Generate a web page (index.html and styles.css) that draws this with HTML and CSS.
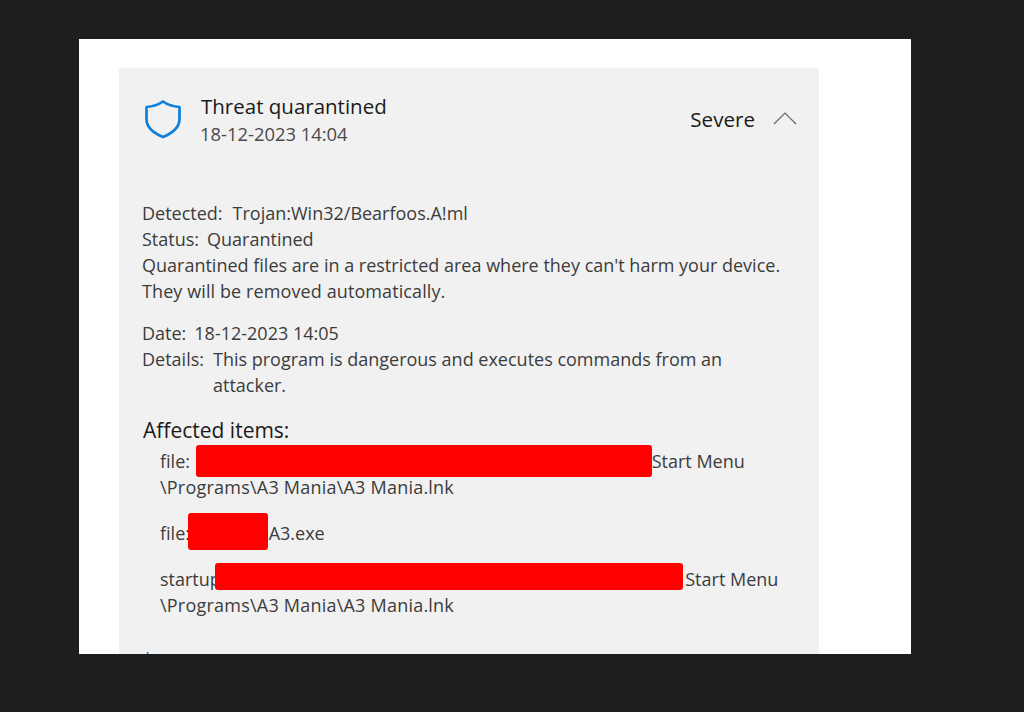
FILE: index.html
```html
<!DOCTYPE html>
<html lang="en">
<head>
    <meta charset="UTF-8">
    <meta name="viewport" content="width=device-width, initial-scale=1.0">
    <title>Threat quarantined</title>
    <link rel="stylesheet" href="styles.css">
</head>
<body>

    <div class="sheet">
        <div class="card">
            <div class="header">
                <svg class="shield" width="38" height="40" viewBox="0 0 38 40">
                    <path d="M19 2.500C24 6 29 7.500 35.500 8V20C35.500 28 29 34 19 38C9 34 2.500 28 2.500 20V8C9 7.500 14 6 19 2.500Z" fill="none" stroke="#0f7fd9" stroke-width="2.700" stroke-linejoin="round"/>
                </svg>
                <div class="heading">
                    <div class="title">Threat quarantined</div>
                    <div class="time">18-12-2023 14:04</div>
                </div>
                <div class="severity">Severe</div>
                <svg class="chevron" width="24" height="14" viewBox="0 0 24 14">
                    <path d="M1 13L12 2L23 13" fill="none" stroke="#666" stroke-width="1.200"/>
                </svg>
            </div>

            <div class="block">
                <p><span class="label">Detected:</span>Trojan:Win32/Bearfoos.A!ml</p>
                <p><span class="label tight">Status:</span>Quarantined</p>
                <p>Quarantined files are in a restricted area where they can't harm your device.</p>
                <p class="wide">They will be removed automatically.</p>
            </div>

            <div class="block">
                <p><span class="label tight">Date:</span>18-12-2023 14:05</p>
                <div class="details">
                    <span class="label details-label">Details:</span>
                    <span class="details-text">This program is dangerous and executes commands from an attacker.</span>
                </div>
            </div>

            <h2>Affected items:</h2>
            <div class="items">
                <p>file: <span class="gap-a"></span>Start Menu<br><span class="path">\Programs\A3 Mania\A3 Mania.lnk</span></p>
                <p>file: <span class="gap-b"></span>A3.exe</p>
                <p>startup: <span class="gap-c"></span>Start Menu<br><span class="path">\Programs\A3 Mania\A3 Mania.lnk</span></p>
            </div>

            <a class="more" href="#">Learn more</a>

            <div class="redact r1"></div>
            <div class="redact r2"></div>
            <div class="redact r3"></div>
        </div>
    </div>

</body>
</html>
```

FILE: styles.css
```css
body {
    font-family: "Open Sans", "Noto Sans", sans-serif;
    background-color: #1e1e1e;
    margin: 0;
    padding: 39px 0 0 79px;
    height: 712px;
    box-sizing: border-box;
    overflow: hidden;
}

.sheet {
    background-color: white;
    width: 832px;
    height: 615px;
    padding: 29px 92px 0 40px;
    box-sizing: border-box;
    overflow: hidden;
}

.card {
    background-color: #f1f1f1;
    height: 586px;
    padding: 26px 22px 0 23px;
    position: relative;
    font-size: 18px;
    line-height: 26px;
    color: #3c3c3c;
}

.header {
    display: flex;
    align-items: flex-start;
    height: 106px;
    margin-left: 2px;
}

.shield {
    margin: 5px 19px 0 0;
}

.heading {
    flex: 1;
}

.title {
    font-size: 20.500px;
    color: #1a1a1a;
    margin-top: -1px;
}

.time {
    font-size: 18.400px;
    margin-top: 2px;
    margin-left: -1px;
    color: #4a4a4a;
}

.severity {
    font-size: 20.600px;
    color: #1a1a1a;
    margin-top: 12px;
}

.chevron {
    margin: 17px 0 0 18px;
}

.block {
    margin-bottom: 16px;
}

.block p {
    margin: 0;
}

.wide {
    letter-spacing: 0.1px;
}

.label {
    margin-right: 10px;
}

.tight {
    margin-right: 8px;
}

.details {
    display: flex;
}

.details-label {
    margin-right: 9px;
}

.details-text {
    max-width: 530px;
}

h2 {
    font-size: 21px;
    font-weight: normal;
    color: #1a1a1a;
    line-height: 28px;
    margin: 18px 0 0 1px;
}

.items {
    margin: 4px 0 0 18px;
}

.items p {
    margin: 0 0 20px;
}

.path {
    letter-spacing: 0.22px;
}

.gap-a {
    display: inline-block;
    width: 457px;
}

.gap-b {
    display: inline-block;
    width: 74px;
}

.gap-c {
    display: inline-block;
    width: 455px;
}

.more {
    color: #0f7fd9;
    text-decoration: none;
    display: block;
    margin: 27px 0 0 3px;
}

.redact {
    position: absolute;
    background-color: #ff0000;
    border-radius: 3px;
}

.r1 {
    left: 77px;
    top: 377px;
    width: 456px;
    height: 32px;
}

.r2 {
    left: 69px;
    top: 445px;
    width: 80px;
    height: 37px;
}

.r3 {
    left: 96px;
    top: 495px;
    width: 468px;
    height: 27px;
}
```
